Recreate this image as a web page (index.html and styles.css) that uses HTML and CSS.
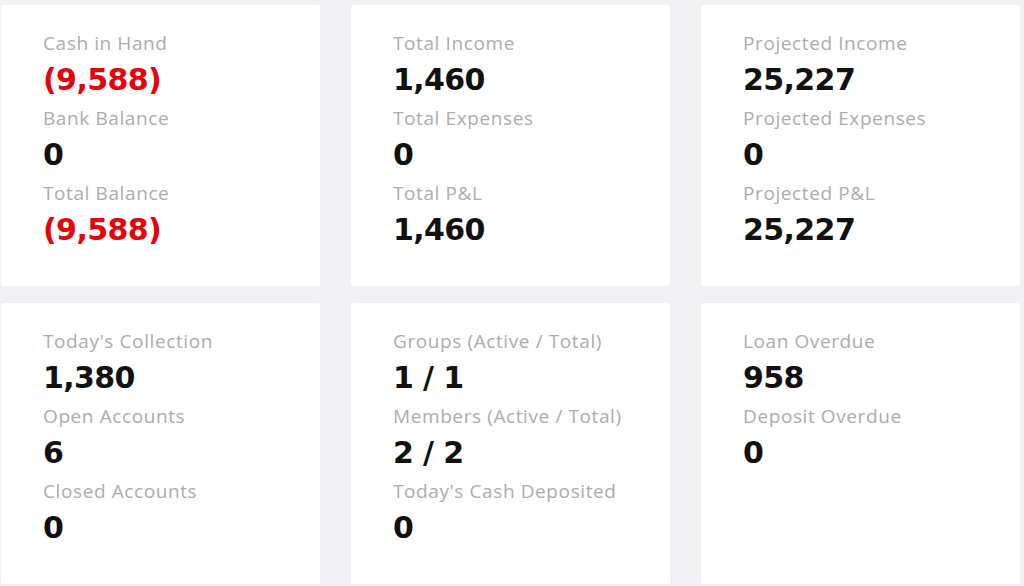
FILE: index.html
```html
<!DOCTYPE html>
<html lang="en">
<head>
  <meta charset="UTF-8" />
  <meta name="viewport" content="width=device-width, initial-scale=1.0"/>
  <title>Dashboard Summary</title>
  <link rel="stylesheet" href="styles.css">
</head>
<body>
  <main class="summary">
    <div class="card">
      <div class="label">Cash in Hand</div>
      <div class="value negative">(9,588)</div>
      <div class="label">Bank Balance</div>
      <div class="value">0</div>
      <div class="label">Total Balance</div>
      <div class="value negative">(9,588)</div>
    </div>
    <div class="card">
      <div class="label">Total Income</div>
      <div class="value">1,460</div>
      <div class="label">Total Expenses</div>
      <div class="value">0</div>
      <div class="label">Total P&amp;L</div>
      <div class="value">1,460</div>
    </div>
    <div class="card">
      <div class="label">Projected Income</div>
      <div class="value">25,227</div>
      <div class="label">Projected Expenses</div>
      <div class="value">0</div>
      <div class="label">Projected P&amp;L</div>
      <div class="value">25,227</div>
    </div>

    <div class="card">
      <div class="label">Today's Collection</div>
      <div class="value">1,380</div>
      <div class="label">Open Accounts</div>
      <div class="value">6</div>
      <div class="label">Closed Accounts</div>
      <div class="value">0</div>
    </div>
    <div class="card">
      <div class="label">Groups (Active / Total)</div>
      <div class="value">1 / 1</div>
      <div class="label">Members (Active / Total)</div>
      <div class="value">2 / 2</div>
      <div class="label">Today's Cash Deposited</div>
      <div class="value">0</div>
    </div>
    <div class="card">
      <div class="label">Loan Overdue</div>
      <div class="value">958</div>
      <div class="label">Deposit Overdue</div>
      <div class="value">0</div>
    </div>
  </main>
</body>
</html>
```

FILE: styles.css
```css
body {
  margin: 0;
  background: #f1f1f4;
  font-family: "Open Sans", "Lato", sans-serif;
}
.summary {
  display: grid;
  grid-template-columns: repeat(3, 319px);
  grid-auto-rows: 281px;
  column-gap: 31px;
  row-gap: 17px;
  padding: 5px 0 0 1px;
}
.card {
  background: white;
  border-radius: 3px;
  padding: 26px 42px;
  box-sizing: border-box;
}
.label {
  color: #acacac;
  font-size: 19px;
  letter-spacing: 0.6px;
  line-height: 24px;
}
.value {
  color: #111;
  font-family: "DejaVu Sans", sans-serif;
  font-size: 30px;
  font-weight: 700;
  letter-spacing: -0.6px;
  line-height: 36px;
  margin: 7px 0 8px;
}
.negative {
  color: #e8000b;
}
```
